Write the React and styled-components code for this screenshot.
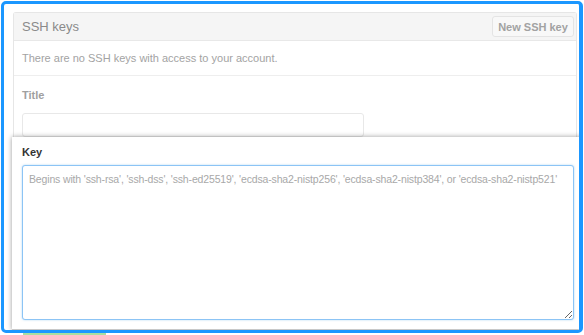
import React from 'react'
import styled, { createGlobalStyle } from 'styled-components'

const GlobalStyle = createGlobalStyle`
  html, body {
    margin: 0;
    padding: 0;
    background: #fff;
    font-family: "Liberation Sans", Arial, sans-serif;
  }
`

const placeholder =
  "Begins with 'ssh-rsa', 'ssh-dss', 'ssh-ed25519', 'ecdsa-sha2-nistp256', 'ecdsa-sha2-nistp384', or 'ecdsa-sha2-nistp521'"

const App = () => {
  return (
    <Page>
      <GlobalStyle />
      <Frame>
        <Panel>
          <PanelHeader>
            <HeaderTitle>SSH keys</HeaderTitle>
            <HeaderButton>New SSH key</HeaderButton>
          </PanelHeader>
          <Notice>There are no SSH keys with access to your account.</Notice>
          <Field>
            <Label>Title</Label>
            <Input />
          </Field>
        </Panel>
        <KeyCard>
          <Label $strong>Key</Label>
          <KeyArea placeholder={placeholder} wrap="off" autoFocus />
        </KeyCard>
      </Frame>
      <SubmitPeek />
    </Page>
  )
}

export default App

/* STYLES */

const Page = styled.div`
  width: 584px;
  height: 335px;
  overflow: hidden;
  padding: 1px 0 0 1px;
  box-sizing: border-box;
`
const Frame = styled.div`
  width: 582px;
  height: 332px;
  box-sizing: border-box;
  border: 3px solid #1b97ff;
  border-right-width: 4px;
  border-radius: 5px;
  padding: 8px 2px 0 9px;
  display: flex;
  flex-direction: column;
  overflow: hidden;
  background: #fff;
`
const Panel = styled.div`
  border: 1px solid #e6e6e6;
  border-bottom: none;
  border-radius: 3px 3px 0 0;
  display: flex;
  flex-direction: column;
`
const PanelHeader = styled.div`
  height: 27px;
  background: #f5f5f5;
  border-bottom: 1px solid #e8e8e8;
  display: flex;
  align-items: center;
  justify-content: space-between;
  padding: 0 2px 0 8px;
`
const HeaderTitle = styled.span`
  font-size: 13px;
  color: #8a8a8a;
`
const HeaderButton = styled.button`
  height: 21px;
  width: 82px;
  padding: 0;
  border: 1px solid #e4e4e4;
  border-radius: 3px;
  background: #f8f8f8;
  font-family: inherit;
  font-size: 11px;
  font-weight: bold;
  color: #a2a2a2;
`
const Notice = styled.div`
  height: 34px;
  border-bottom: 1px solid #eeeeee;
  display: flex;
  align-items: center;
  padding: 0 8px;
  font-size: 11px;
  color: #a3a3a3;
`
const Field = styled.div`
  height: 61px;
  display: flex;
  flex-direction: column;
  padding: 12px 8px 0;
  box-sizing: border-box;
`
const Label = styled.div`
  font-size: 11px;
  font-weight: bold;
  line-height: 14px;
  color: ${(p) => (p.$strong ? '#333' : '#a0a0a0')};
  margin-bottom: ${(p) => (p.$strong ? '6px' : '11px')};
`
const Input = styled.div`
  width: 342px;
  height: 25px;
  box-sizing: border-box;
  border: 1px solid #e8e8e8;
  border-radius: 3px;
  background: #fff;
`
const KeyCard = styled.div`
  flex: 1;
  margin: 0 -10px 0 -1px;
  padding: 8px 0 0 10px;
  background: #fff;
  box-shadow: 0 0 5px rgba(0, 0, 0, 0.4);
  border-bottom: 1px solid #c8c8c8;
  display: flex;
  flex-direction: column;
  position: relative;
`
const KeyArea = styled.textarea`
  width: 552px;
  height: 155px;
  box-sizing: border-box;
  border: 1px solid #8cc4f5;
  border-radius: 3px;
  box-shadow: 0 0 2px rgba(81, 167, 232, 0.5);
  outline: none;
  padding: 7px 6px;
  font-family: "Liberation Sans", Arial, sans-serif;
  font-size: 10.5px;
  letter-spacing: -0.15px;
  color: #333;
  caret-color: #333;
  &::placeholder {
    color: #a8a8a8;
  }
`
const SubmitPeek = styled.div`
  margin-left: 22px;
  width: 83px;
  height: 3px;
  background: #a6dfa2;
`
